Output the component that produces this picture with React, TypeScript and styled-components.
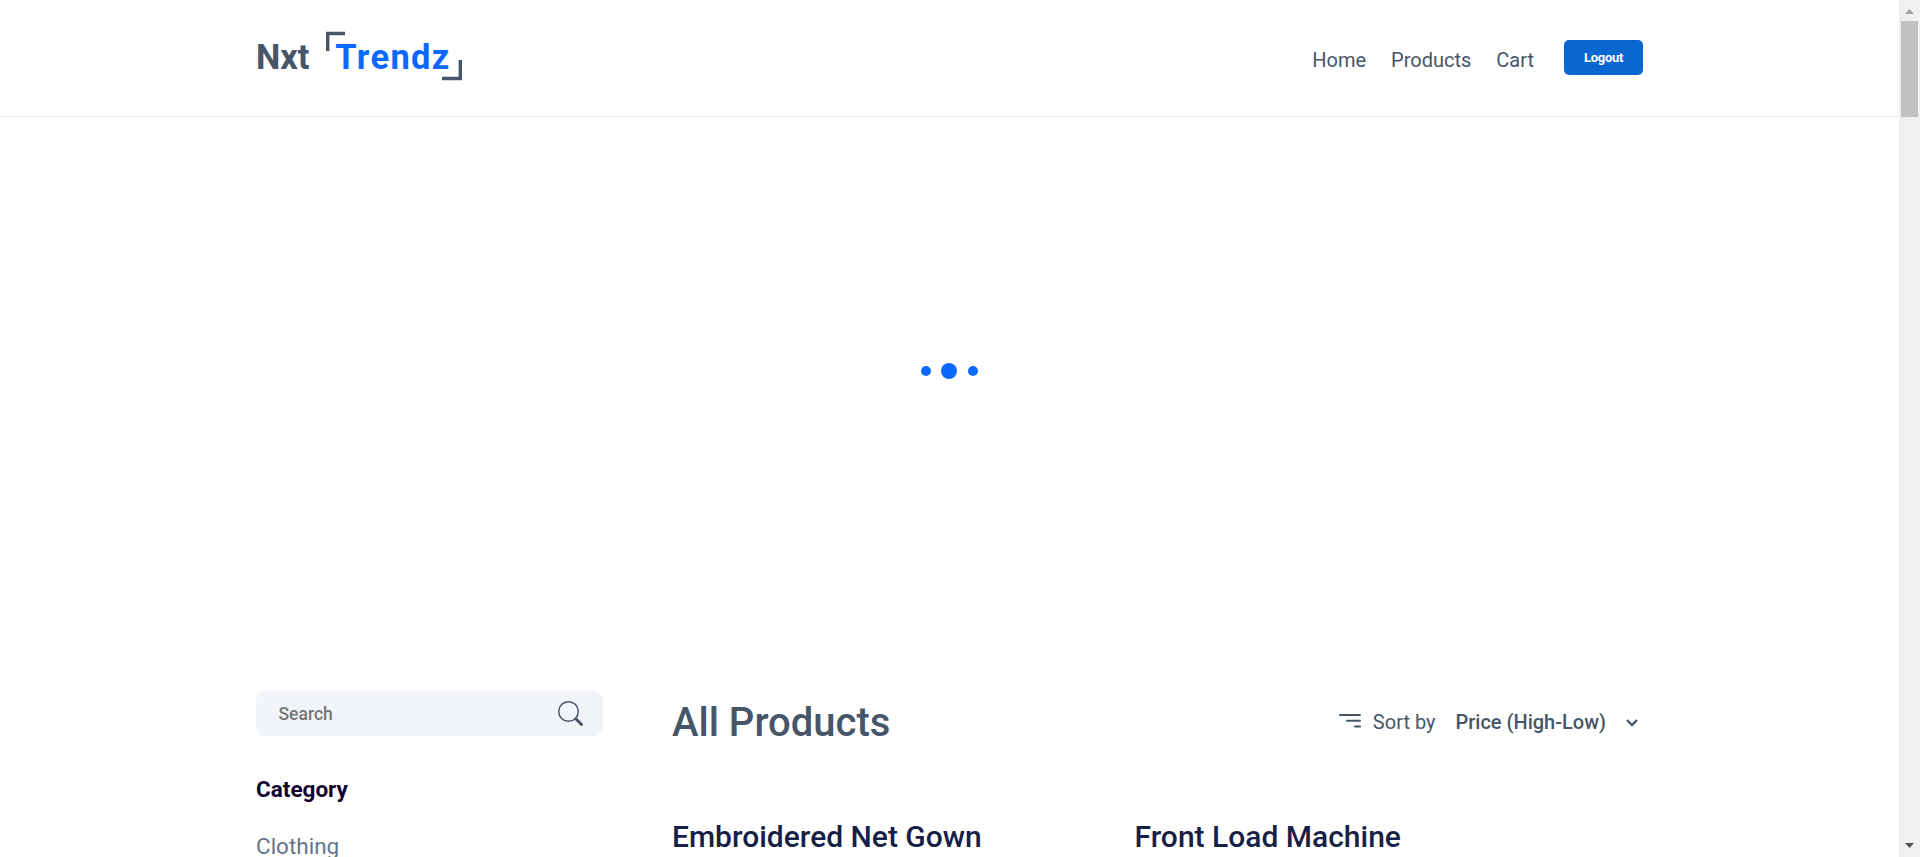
import React from 'react'
import styled, {createGlobalStyle} from 'styled-components'

const GlobalStyle = createGlobalStyle`
  * { box-sizing: border-box; }
  body { margin: 0; background: #fff; font-family: Roboto, 'Liberation Sans', sans-serif; overflow: hidden; }
  h1, h2, p, ul { margin: 0; padding: 0; }
`
const Window = styled.div`
  display: flex;
  width: 100%;
  height: 857px;
  overflow: hidden;
`
const Page = styled.div`
  flex: 1;
  min-width: 0;
`
const Header = styled.header`
  height: 117px;
  border-bottom: 1px solid #f1f1f2;
  padding: 0 256px;
  display: flex;
  align-items: flex-start;
  justify-content: space-between;
`
const Logo = styled.svg`
  display: block;
  width: 210px;
  height: 52px;
  margin-top: 30px;
  font-family: Roboto, 'Liberation Sans', sans-serif;
  font-weight: 700;
`
const Nav = styled.nav`
  display: flex;
  align-items: flex-start;
  padding-top: 40px;
`
const NavLink = styled.a<{$gap: number}>`
  font-size: 20px;
  line-height: 24px;
  color: #475569;
  margin: 8px ${p => p.$gap}px 0 0;
`
const LogoutButton = styled.button`
  width: 79px;
  height: 35px;
  padding: 0;
  border: none;
  border-radius: 5px;
  background: #0967d2;
  color: #fff;
  font: 700 13px/35px Roboto, sans-serif;
  letter-spacing: -0.3px;
`
const Loader = styled.div`
  height: 508px;
  display: flex;
  align-items: center;
  justify-content: center;
  gap: 10.5px;
  padding-right: 1px;
`
const Dot = styled.span<{$size: number}>`
  width: ${p => p.$size}px;
  height: ${p => p.$size}px;
  border-radius: 50%;
  background: #0b69ff;
`
const Products = styled.main`
  display: flex;
  gap: 69px;
  padding: 66px 256px 0;
`
const Sidebar = styled.aside`
  width: 347px;
  flex-shrink: 0;
`
const SearchBox = styled.div`
  height: 45px;
  border-radius: 9px;
  background: #f1f5f9;
  display: flex;
  align-items: center;
  justify-content: space-between;
  padding: 0 19px 0 22.5px;
`
const SearchInput = styled.input`
  width: 220px;
  border: none;
  outline: none;
  padding: 0;
  background: transparent;
  font: 500 17.5px/22px Roboto, sans-serif;
  &::placeholder { color: #757575; opacity: 1; }
`
const FilterHeading = styled.h1`
  margin-top: 38px;
  font-size: 22.5px;
  line-height: 30px;
  font-weight: 700;
  color: #12022f;
`
const FilterItem = styled.p`
  margin-top: 27px;
  font-size: 22.5px;
  line-height: 30px;
  color: #64748b;
`
const Content = styled.section`
  flex: 1;
`
const ContentHeader = styled.div`
  display: flex;
  justify-content: space-between;
  height: 62px;
  align-items: center;
  white-space: nowrap;
`
const Title = styled.h1`
  font-size: 40px;
  line-height: 48px;
  margin-top: 2px;
  font-weight: 500;
  color: #475569;
`
const Sort = styled.div`
  display: flex;
  align-items: center;
  color: #475569;
  font-size: 20px;
  line-height: 24px;
`
const SortIcon = styled.svg`
  width: 24px;
  height: 18px;
  margin: 0 11px 2px 0;
`
const SortValue = styled.span`
  font-weight: 500;
  margin-left: 20px;
`
const Chevron = styled.svg`
  width: 14px;
  height: 10px;
  margin: 1px 4px 0 19px;
`
const ProductGrid = styled.div`
  display: grid;
  grid-template-columns: 462.5px 1fr;
  margin-top: 66px;
`
const ProductName = styled.h2`
  font-size: 30px;
  line-height: 36px;
  font-weight: 500;
  color: #171f46;
  white-space: nowrap;
`
const Scrollbar = styled.div`
  width: 21px;
  background: #f0f0f0;
  display: flex;
  flex-direction: column;
  align-items: center;
`
const Arrow = styled.svg`
  width: 21px;
  height: 21px;
  flex-shrink: 0;
`
const Thumb = styled.div`
  width: 17px;
  height: 96px;
  background: #c1c1c1;
  margin-bottom: auto;
`

export default function App() {
  return (
    <>
      <GlobalStyle />
      <Window>
        <Page>
          <Header>
            <Logo viewBox="0 0 210 52">
              <text x="0" y="39" fontSize="35" fill="#475569" textLength="53.5" lengthAdjust="spacingAndGlyphs">Nxt</text>
              <text x="79.3" y="39" fontSize="34.5" fill="#0b69ff" textLength="114" lengthAdjust="spacing">Trendz</text>
              <path d="M71.7 21V3.5H89" fill="none" stroke="#475569" strokeWidth="3.4" />
              <path d="M186 48.5H204.3V30" fill="none" stroke="#475569" strokeWidth="3.4" />
            </Logo>
            <Nav>
              <NavLink $gap={25}>Home</NavLink>
              <NavLink $gap={25}>Products</NavLink>
              <NavLink $gap={30}>Cart</NavLink>
              <LogoutButton>Logout</LogoutButton>
            </Nav>
          </Header>
          <Loader>
            <Dot $size={10} />
            <Dot $size={16} />
            <Dot $size={10} />
          </Loader>
          <Products>
            <Sidebar>
              <SearchBox>
                <SearchInput placeholder="Search" />
                <svg width="27" height="27" viewBox="0 0 27 27" fill="none" stroke="#475569">
                  <circle cx="11.5" cy="11.5" r="9.8" strokeWidth="1.5" />
                  <path d="M18 18L20 20" strokeWidth="1.8" />
                  <path d="M19.5 19.5L24.5 24.5" strokeWidth="3" strokeLinecap="round" />
                </svg>
              </SearchBox>
              <FilterHeading>Category</FilterHeading>
              <FilterItem>Clothing</FilterItem>
            </Sidebar>
            <Content>
              <ContentHeader>
                <Title>All Products</Title>
                <Sort>
                  <SortIcon viewBox="0 0 24 18" fill="none" stroke="#475569" strokeWidth="2" strokeLinecap="round">
                    <path d="M2 3H22M9 8.8H22M17 14.5H22" />
                  </SortIcon>
                  Sort by
                  <SortValue>Price (High-Low)</SortValue>
                  <Chevron viewBox="0 0 14 10" fill="none" stroke="#475569" strokeWidth="2.3">
                    <path d="M2 2L7 7L12 2" />
                  </Chevron>
                </Sort>
              </ContentHeader>
              <ProductGrid>
                <ProductName>Embroidered Net Gown</ProductName>
                <ProductName>Front Load Machine</ProductName>
              </ProductGrid>
            </Content>
          </Products>
        </Page>
        <Scrollbar>
          <Arrow viewBox="0 0 21 21"><path d="M6 14H15L10.5 9Z" fill="#a3a3a3" /></Arrow>
          <Thumb />
          <Arrow viewBox="0 0 21 21"><path d="M6 7H15L10.5 12Z" fill="#505050" /></Arrow>
        </Scrollbar>
      </Window>
    </>
  )
}
